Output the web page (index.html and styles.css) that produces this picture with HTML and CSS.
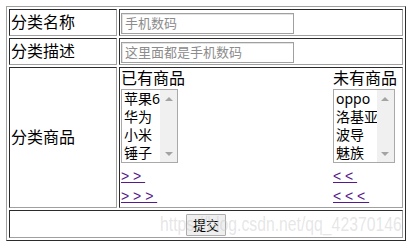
FILE: index.html
```html
<!DOCTYPE html>
<html lang="zh-CN">
<head>
  <meta charset="UTF-8">
  <title>分类管理</title>
  <link rel="stylesheet" href="styles.css">
</head>
<body>
  <div class="page">
    <table class="form-table">
      <tr>
        <td class="label">分类名称</td>
        <td><input type="text" class="text-input" placeholder="手机数码"></td>
      </tr>
      <tr>
        <td class="label">分类描述</td>
        <td><input type="text" class="text-input" placeholder="这里面都是手机数码"></td>
      </tr>
      <tr>
        <td class="label">分类商品</td>
        <td>
          <div class="goods">
            <div class="goods-col">
              <div class="goods-title">已有商品</div>
              <div class="listbox">
                <div class="list-items">
                  <div class="list-item">苹果6</div>
                  <div class="list-item">华为</div>
                  <div class="list-item">小米</div>
                  <div class="list-item">锤子</div>
                </div>
                <div class="scrollbar"><span class="arrow up"></span><span class="arrow down"></span></div>
              </div>
              <a class="move-link first" href="#">&gt; &gt;&nbsp;</a>
              <a class="move-link" href="#">&gt; &gt; &gt;&nbsp;</a>
            </div>
            <div class="goods-col right">
              <div class="goods-title">未有商品</div>
              <div class="listbox">
                <div class="list-items">
                  <div class="list-item">oppo</div>
                  <div class="list-item">洛基亚</div>
                  <div class="list-item">波导</div>
                  <div class="list-item">魅族</div>
                </div>
                <div class="scrollbar"><span class="arrow up"></span><span class="arrow down"></span></div>
              </div>
              <a class="move-link first" href="#">&lt; &lt;&nbsp;</a>
              <a class="move-link" href="#">&lt; &lt; &lt;&nbsp;</a>
            </div>
          </div>
        </td>
      </tr>
      <tr>
        <td colspan="2" class="submit-cell"><button class="btn">提交</button></td>
      </tr>
    </table>
    <div class="watermark">https://blog.csdn.net/qq_42370146</div>
  </div>
</body>
</html>
```

FILE: styles.css
```css
body {
  margin: 6px;
  font-family: "Noto Sans", "Noto Sans CJK SC", sans-serif;
  font-size: 16px;
  color: #000;
  background: #fff;
}
.page {
  position: relative;
}
.form-table {
  width: 400px;
  border-collapse: separate;
  border-spacing: 2px;
  border: 1px solid;
  border-color: #a0a0a0 #2b2b2b #2b2b2b #a0a0a0;
}
.form-table td {
  border: 1px solid;
  border-color: #2b2b2b #a0a0a0 #a0a0a0 #2b2b2b;
  padding: 1px;
}
.label {
  width: 104px;
  line-height: 23px;
  white-space: nowrap;
}
.text-input {
  display: block;
  box-sizing: border-box;
  width: 173px;
  height: 21px;
  margin: 1px 0 0 0;
  padding: 0 3px;
  border: 1px solid #a0a0a0;
  box-shadow: inset 1px 1px 0 #e3e3e3;
  font-family: "Noto Sans", "Noto Sans CJK SC", sans-serif;
  font-size: 13px;
  outline: none;
}
.text-input::placeholder {
  color: #8c8c8c;
}
.goods {
  display: flex;
  justify-content: space-between;
}
.goods-col {
  display: flex;
  flex-direction: column;
  align-items: flex-start;
}
.goods-col.right {
  margin-right: 4px;
}
.goods-title {
  line-height: 19px;
}
.listbox {
  display: flex;
  box-sizing: border-box;
  width: 57px;
  height: 74px;
  margin-top: 1px;
  border: 1px solid #a9a9a9;
  background: #fff;
}
.goods-col.right .listbox {
  width: 62px;
}
.list-items {
  flex: 1;
  min-width: 0;
  overflow: hidden;
  font-size: 14px;
}
.list-item {
  padding: 0 2px;
  line-height: 18px;
  white-space: nowrap;
}
.scrollbar {
  width: 17px;
  flex: none;
  background: #f0f0f0;
  display: flex;
  flex-direction: column;
  justify-content: space-between;
  align-items: center;
  padding: 7px 0 6px 0;
  box-sizing: border-box;
}
.arrow {
  width: 0;
  height: 0;
  border-left: 4px solid transparent;
  border-right: 4px solid transparent;
}
.arrow.up {
  border-bottom: 4px solid #a3a3a3;
}
.arrow.down {
  border-top: 4px solid #a3a3a3;
}
.move-link {
  font-family: "Liberation Sans", sans-serif;
  font-size: 14px;
  line-height: 20px;
  color: #551a8b;
  text-decoration: underline;
  white-space: nowrap;
}
.move-link.first {
  margin-top: 3px;
}
.submit-cell {
  text-align: center;
  height: 22px;
}
.btn {
  display: inline-block;
  height: 22px;
  padding: 0 6px;
  background: #efefef;
  border: 1px solid #adadad;
  border-radius: 1px;
  font-family: "Noto Sans CJK SC", sans-serif;
  font-size: 13px;
  color: #000;
  vertical-align: middle;
}
.watermark {
  position: absolute;
  left: 154px;
  top: 206px;
  font-family: "Liberation Sans", sans-serif;
  font-size: 21px;
  color: rgba(200, 200, 200, 0.45);
  white-space: nowrap;
  transform: scaleX(0.75);
  transform-origin: left top;
  pointer-events: none;
}
```
